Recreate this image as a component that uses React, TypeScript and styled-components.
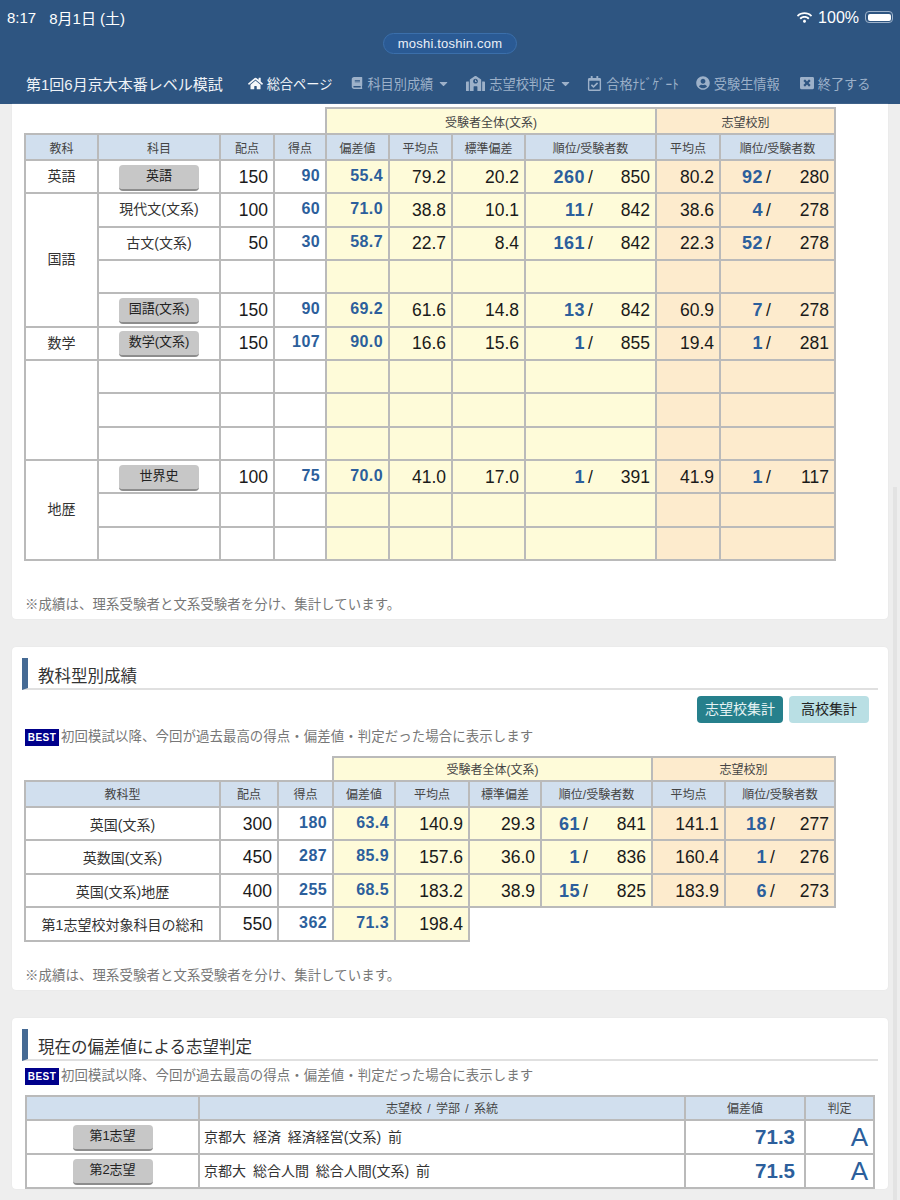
import styled, { createGlobalStyle } from "styled-components";
import {
  FaBook,
  FaCaretDown,
  FaHome,
  FaRegCalendarCheck,
  FaSchool,
  FaUserCircle,
  FaWifi,
  FaWindowClose,
} from "react-icons/fa";

type Tone = "white" | "yellow" | "orange" | "head";

const TONES: Record<Tone, string> = {
  white: "#ffffff",
  yellow: "#fefbd9",
  orange: "#fdebcd",
  head: "#d1dfee",
};

const NOTE = "※成績は、理系受験者と文系受験者を分け、集計しています。";
const BEST_NOTE = "初回模試以降、今回が過去最高の得点・偏差値・判定だった場合に表示します";

type SubjectRow = {
  group?: { label: string; span: number };
  subject?: string;
  button?: boolean;
  values?: string[];
};

const SUBJECT_ROWS: SubjectRow[] = [
  {
    group: { label: "英語", span: 1 },
    subject: "英語",
    button: true,
    values: ["150", "90", "55.4", "79.2", "20.2", "260", "850", "80.2", "92", "280"],
  },
  {
    group: { label: "国語", span: 4 },
    subject: "現代文(文系)",
    values: ["100", "60", "71.0", "38.8", "10.1", "11", "842", "38.6", "4", "278"],
  },
  {
    subject: "古文(文系)",
    values: ["50", "30", "58.7", "22.7", "8.4", "161", "842", "22.3", "52", "278"],
  },
  {},
  {
    subject: "国語(文系)",
    button: true,
    values: ["150", "90", "69.2", "61.6", "14.8", "13", "842", "60.9", "7", "278"],
  },
  {
    group: { label: "数学", span: 1 },
    subject: "数学(文系)",
    button: true,
    values: ["150", "107", "90.0", "16.6", "15.6", "1", "855", "19.4", "1", "281"],
  },
  { group: { label: "", span: 3 } },
  {},
  {},
  {
    group: { label: "地歴", span: 3 },
    subject: "世界史",
    button: true,
    values: ["100", "75", "70.0", "41.0", "17.0", "1", "391", "41.9", "1", "117"],
  },
  {},
  {},
];

const TYPE_ROWS = [
  ["英国(文系)", "300", "180", "63.4", "140.9", "29.3", "61", "841", "141.1", "18", "277"],
  ["英数国(文系)", "450", "287", "85.9", "157.6", "36.0", "1", "836", "160.4", "1", "276"],
  ["英国(文系)地歴", "400", "255", "68.5", "183.2", "38.9", "15", "825", "183.9", "6", "273"],
];

const GlobalStyle = createGlobalStyle`
  html, body {
    margin: 0;
    padding: 0;
    background: #eeeeee;
  }
  body {
    font-family: "Liberation Sans", "Noto Sans CJK JP", sans-serif;
  }
`;

const Screen = styled.div`
  position: relative;
  width: 900px;
  height: 1200px;
  overflow: hidden;
  background: #eeeeee;
`;

const TopBar = styled.header`
  height: 104px;
  background: #2e5581;
  color: #fff;
  display: flex;
  flex-direction: column;
`;

const StatusRow = styled.div`
  display: flex;
  justify-content: space-between;
  align-items: center;
  height: 20px;
  padding: 7px 7px 0 7px;
  font-size: 15px;
`;

const StatusGroup = styled.div<{ $gap: number }>`
  display: flex;
  align-items: center;
  gap: ${(p) => p.$gap}px;
`;

const Percent = styled.span`
  font-size: 16px;
  line-height: 22px;
  padding-top: 2px;
`;

const Battery = styled.span`
  display: block;
  width: 28px;
  height: 12px;
  box-sizing: border-box;
  padding: 1.5px;
  border: 1px solid #9fb3cb;
  border-radius: 4px;
  &::before {
    content: "";
    display: block;
    height: 100%;
    background: #fff;
    border-radius: 2px;
  }
`;

const UrlRow = styled.div`
  display: flex;
  justify-content: center;
  margin-top: 6px;
`;

const UrlPill = styled.div`
  width: 134px;
  height: 21px;
  line-height: 20px;
  box-sizing: border-box;
  text-align: center;
  font-size: 13px;
  letter-spacing: 0.2px;
  border-radius: 11px;
  background: #2a5a94;
  border: 1px solid #3b6fab;
  color: #eaf0f7;
`;

const NavRow = styled.nav`
  display: flex;
  align-items: center;
  height: 30px;
  margin-top: 14px;
  padding-left: 26px;
`;

const NavTitle = styled.div`
  font-size: 15px;
  color: #eef2f7;
  margin-right: 25px;
`;

const NavItem = styled.div<{ $active?: boolean; $after?: number }>`
  display: flex;
  align-items: center;
  gap: 4px;
  margin-right: ${(p) => p.$after ?? 19}px;
  font-size: 13.2px;
  white-space: nowrap;
  color: ${(p) => (p.$active ? "#f5f7fa" : "#9db1c9")};
`;

const Content = styled.main`
  display: flex;
  flex-direction: column;
  gap: 28px;
  padding: 0 12px;
`;

const Card = styled.section<{ $top?: boolean }>`
  background: #fff;
  border-radius: ${(p) => (p.$top ? "0 0 4px 4px" : "4px")};
  box-shadow: 0 0 1px #d8d8d8;
  padding: ${(p) => (p.$top ? "3px 10px 0" : "11px 10px 0")};
`;

const Heading = styled.h2`
  margin: 0;
  height: 32px;
  line-height: 36px;
  box-sizing: border-box;
  padding-left: 10px;
  border-left: 6px solid #456a94;
  border-bottom: 2px solid #e0e0e0;
  font-size: 16.5px;
  font-weight: 400;
  color: #333;
`;

const ToggleRow = styled.div`
  display: flex;
  justify-content: flex-end;
  gap: 6px;
  margin: 6px 9px 0 0;
`;

const Toggle = styled.div<{ $on?: boolean }>`
  height: 27px;
  line-height: 27px;
  padding: 0 ${(p) => (p.$on ? "8px" : "12px")};
  border-radius: 4px;
  font-size: 14px;
  background: ${(p) => (p.$on ? "#26808c" : "#b9dfe4")};
  color: ${(p) => (p.$on ? "#e6f3f4" : "#222")};
`;

const BestLine = styled.div<{ $top: number }>`
  display: flex;
  align-items: flex-start;
  margin: ${(p) => p.$top}px 0 0 3px;
  height: 18px;
  line-height: 16px;
  font-size: 13.4px;
  letter-spacing: 0.1px;
  color: #777;
`;

const BestBadge = styled.span`
  display: block;
  width: 34px;
  height: 17px;
  margin-right: 2px;
  line-height: 17px;
  text-align: center;
  background: #00008b;
  color: #fff;
  font-size: 10px;
  font-weight: 700;
  letter-spacing: 0.5px;
`;

const Note = styled.p<{ $top: number }>`
  margin: ${(p) => p.$top}px 0 0 3px;
  padding-bottom: 4px;
  height: 20px;
  line-height: 20px;
  font-size: 13.4px;
  letter-spacing: 0.1px;
  color: #777;
`;

const Grid = styled.table<{ $w: number; $left: number; $top: number }>`
  border-collapse: collapse;
  table-layout: fixed;
  width: ${(p) => p.$w}px;
  margin: ${(p) => p.$top}px 0 0 ${(p) => p.$left}px;
`;

const Col = styled.col<{ $w: number }>`
  width: ${(p) => p.$w}px;
`;

const Blank = styled.th`
  border: none;
  padding: 0;
`;

const HeadCell = styled.th<{ $tone?: Tone; $h: number }>`
  box-sizing: border-box;
  height: ${(p) => p.$h}px;
  padding: 0;
  border: 2px solid #bababa;
  background: ${(p) => TONES[p.$tone ?? "head"]};
  font-size: 12px;
  font-weight: 400;
  color: #444;
  text-align: center;
`;

const SchoolHead = styled(HeadCell)`
  word-spacing: 2px;
`;

const Cell = styled.td<{ $tone?: Tone; $h: number }>`
  box-sizing: border-box;
  height: ${(p) => p.$h}px;
  padding: 1px 5px 0 6px;
  border: 2px solid #bababa;
  background: ${(p) => TONES[p.$tone ?? "white"]};
  font-size: 17.5px;
  color: #1a1a1a;
  text-align: right;
  white-space: nowrap;
`;

const LabelCell = styled(Cell)`
  padding: 0 5px;
  font-size: 14px;
  color: #333;
  text-align: center;
`;

const SubjectCell = styled(LabelCell)`
  padding-bottom: 3px;
`;

const ButtonCell = styled(LabelCell)`
  padding-top: 2px;
`;

const SchoolCell = styled(Cell)`
  padding: 0 0 1px 4px;
  font-size: 14px;
  word-spacing: 3px;
  color: #333;
  text-align: left;
`;

const ScoreCell = styled(Cell)`
  padding-right: 9px;
`;

const Score = styled.span`
  font-size: 16px;
  font-weight: 700;
  letter-spacing: 0.4px;
  vertical-align: 2px;
  color: #2c5f9c;
`;

const BigScore = styled.span`
  font-size: 20.5px;
  font-weight: 700;
  color: #2c5f9c;
`;

const Grade = styled.span`
  font-size: 26px;
  color: #2c5f9c;
`;

const RankBox = styled.div<{ $w: number }>`
  display: grid;
  grid-template-columns: ${(p) => p.$w}px 11px 1fr;
  align-items: center;
  text-align: right;
`;

const RankNum = styled.span`
  font-size: 18px;
  font-weight: 700;
  letter-spacing: 0.5px;
  color: #2c5f9c;
`;

const Slash = styled.span`
  text-align: center;
`;

const GrayButton = styled.div`
  width: 80px;
  height: 26px;
  margin: 0 auto;
  box-sizing: border-box;
  line-height: 22px;
  text-align: center;
  font-size: 13px;
  color: #222;
  background: #c7c7c7;
  border-bottom: 2px solid #8d8d8d;
  border-radius: 4px;
`;

const Caret = styled(FaCaretDown)`
  margin-right: -4px;
`;

const ScrollThumb = styled.div`
  position: absolute;
  top: 487px;
  right: 3px;
  bottom: 0;
  width: 4px;
  background: #e3e3e3;
`;

const Rank = ({ n, total, w }: { n: string; total: string; w: number }) => (
  <RankBox $w={w}>
    <RankNum>{n}</RankNum>
    <Slash>/</Slash>
    <span>{total}</span>
  </RankBox>
);

function SubjectTable() {
  const widths = [73, 122, 54, 52, 63, 63, 73, 131, 64, 115];
  const h = 33.33;
  return (
    <Grid $w={810} $left={2} $top={0}>
      <colgroup>
        {widths.map((w, i) => (
          <Col key={i} $w={w} />
        ))}
      </colgroup>
      <thead>
        <tr>
          <Blank colSpan={4} />
          <HeadCell $h={26} $tone="yellow" colSpan={4}>
            受験者全体(文系)
          </HeadCell>
          <HeadCell $h={26} $tone="orange" colSpan={2}>
            志望校別
          </HeadCell>
        </tr>
        <tr>
          {["教科", "科目", "配点", "得点", "偏差値", "平均点", "標準偏差", "順位/受験者数", "平均点", "順位/受験者数"].map(
            (t, i) => (
              <HeadCell key={i} $h={26}>
                {t}
              </HeadCell>
            ),
          )}
        </tr>
      </thead>
      <tbody>
        {SUBJECT_ROWS.map((row, i) => {
          const v = row.values;
          return (
            <tr key={i}>
              {row.group && (
                <SubjectCell $h={h} rowSpan={row.group.span}>
                  {row.group.label}
                </SubjectCell>
              )}
              {row.button ? (
                <ButtonCell $h={h}>
                  <GrayButton>{row.subject}</GrayButton>
                </ButtonCell>
              ) : (
                <SubjectCell $h={h}>{row.subject}</SubjectCell>
              )}
              <Cell $h={h}>{v?.[0]}</Cell>
              <Cell $h={h}>{v && <Score>{v[1]}</Score>}</Cell>
              <Cell $h={h} $tone="yellow">
                {v && <Score>{v[2]}</Score>}
              </Cell>
              <Cell $h={h} $tone="yellow">
                {v?.[3]}
              </Cell>
              <Cell $h={h} $tone="yellow">
                {v?.[4]}
              </Cell>
              <Cell $h={h} $tone="yellow">
                {v && <Rank n={v[5]} total={v[6]} w={53} />}
              </Cell>
              <Cell $h={h} $tone="orange">
                {v?.[7]}
              </Cell>
              <Cell $h={h} $tone="orange">
                {v && <Rank n={v[8]} total={v[9]} w={36} />}
              </Cell>
            </tr>
          );
        })}
      </tbody>
    </Grid>
  );
}

function TypeTable() {
  const widths = [195, 58, 55, 62, 74, 72, 111, 73, 110];
  const h = 33.5;
  return (
    <Grid $w={810} $left={2} $top={9}>
      <colgroup>
        {widths.map((w, i) => (
          <Col key={i} $w={w} />
        ))}
      </colgroup>
      <thead>
        <tr>
          <Blank colSpan={3} />
          <HeadCell $h={24} $tone="yellow" colSpan={4}>
            受験者全体(文系)
          </HeadCell>
          <HeadCell $h={24} $tone="orange" colSpan={2}>
            志望校別
          </HeadCell>
        </tr>
        <tr>
          {["教科型", "配点", "得点", "偏差値", "平均点", "標準偏差", "順位/受験者数", "平均点", "順位/受験者数"].map((t, i) => (
            <HeadCell key={i} $h={26}>
              {t}
            </HeadCell>
          ))}
        </tr>
      </thead>
      <tbody>
        {TYPE_ROWS.map((v) => (
          <tr key={v[0]}>
            <LabelCell $h={h}>{v[0]}</LabelCell>
            <Cell $h={h}>{v[1]}</Cell>
            <Cell $h={h}>
              <Score>{v[2]}</Score>
            </Cell>
            <Cell $h={h} $tone="yellow">
              <Score>{v[3]}</Score>
            </Cell>
            <Cell $h={h} $tone="yellow">
              {v[4]}
            </Cell>
            <Cell $h={h} $tone="yellow">
              {v[5]}
            </Cell>
            <Cell $h={h} $tone="yellow">
              <Rank n={v[6]} total={v[7]} w={32} />
            </Cell>
            <Cell $h={h} $tone="orange">
              {v[8]}
            </Cell>
            <Cell $h={h} $tone="orange">
              <Rank n={v[9]} total={v[10]} w={35} />
            </Cell>
          </tr>
        ))}
        <tr>
          <LabelCell $h={h}>第1志望校対象科目の総和</LabelCell>
          <Cell $h={h}>550</Cell>
          <Cell $h={h}>
            <Score>362</Score>
          </Cell>
          <Cell $h={h} $tone="yellow">
            <Score>71.3</Score>
          </Cell>
          <Cell $h={h} $tone="yellow">
            198.4
          </Cell>
        </tr>
      </tbody>
    </Grid>
  );
}

function JudgeTable() {
  const rows = [
    ["第1志望", "京都大 経済 経済経営(文系) 前", "71.3"],
    ["第2志望", "京都大 総合人間 総合人間(文系) 前", "71.5"],
  ];
  return (
    <Grid $w={848} $left={3} $top={9}>
      <colgroup>
        {[173, 486, 120, 69].map((w, i) => (
          <Col key={i} $w={w} />
        ))}
      </colgroup>
      <thead>
        <tr>
          <HeadCell $h={24} />
          <SchoolHead $h={24}>志望校 / 学部 / 系統</SchoolHead>
          <HeadCell $h={24}>偏差値</HeadCell>
          <HeadCell $h={24}>判定</HeadCell>
        </tr>
      </thead>
      <tbody>
        {rows.map((r) => (
          <tr key={r[0]}>
            <ButtonCell $h={34}>
              <GrayButton>{r[0]}</GrayButton>
            </ButtonCell>
            <SchoolCell $h={34}>{r[1]}</SchoolCell>
            <ScoreCell $h={34}>
              <BigScore>{r[2]}</BigScore>
            </ScoreCell>
            <Cell $h={34}>
              <Grade>A</Grade>
            </Cell>
          </tr>
        ))}
      </tbody>
    </Grid>
  );
}

export default function App() {
  return (
    <Screen>
      <GlobalStyle />
      <TopBar>
        <StatusRow>
          <StatusGroup $gap={13}>
            <span>8:17</span>
            <span>8月1日 (土)</span>
          </StatusGroup>
          <StatusGroup $gap={6}>
            <FaWifi size={15} />
            <Percent>100%</Percent>
            <Battery />
          </StatusGroup>
        </StatusRow>
        <UrlRow>
          <UrlPill>moshi.toshin.com</UrlPill>
        </UrlRow>
        <NavRow>
          <NavTitle>第1回6月京大本番レベル模試</NavTitle>
          <NavItem $active>
            <FaHome size={15} />
            総合ページ
          </NavItem>
          <NavItem $after={20}>
            <FaBook size={12} />
            科目別成績
            <Caret size={13} />
          </NavItem>
          <NavItem>
            <FaSchool size={19} />
            志望校判定
            <Caret size={13} />
          </NavItem>
          <NavItem $after={17}>
            <FaRegCalendarCheck size={15} />
            合格ﾅﾋﾞｹﾞｰﾄ
          </NavItem>
          <NavItem $after={20}>
            <FaUserCircle size={14} />
            受験生情報
          </NavItem>
          <NavItem>
            <FaWindowClose size={14} />
            終了する
          </NavItem>
        </NavRow>
      </TopBar>
      <Content>
        <Card $top>
          <SubjectTable />
          <Note $top={34}>{NOTE}</Note>
        </Card>
        <Card>
          <Heading>教科型別成績</Heading>
          <ToggleRow>
            <Toggle $on>志望校集計</Toggle>
            <Toggle>高校集計</Toggle>
          </ToggleRow>
          <BestLine $top={6}>
            <BestBadge>BEST</BestBadge>
            {BEST_NOTE}
          </BestLine>
          <TypeTable />
          <Note $top={24}>{NOTE}</Note>
        </Card>
        <Card>
          <Heading>現在の偏差値による志望判定</Heading>
          <BestLine $top={7}>
            <BestBadge>BEST</BestBadge>
            {BEST_NOTE}
          </BestLine>
          <JudgeTable />
        </Card>
      </Content>
      <ScrollThumb />
    </Screen>
  );
}
